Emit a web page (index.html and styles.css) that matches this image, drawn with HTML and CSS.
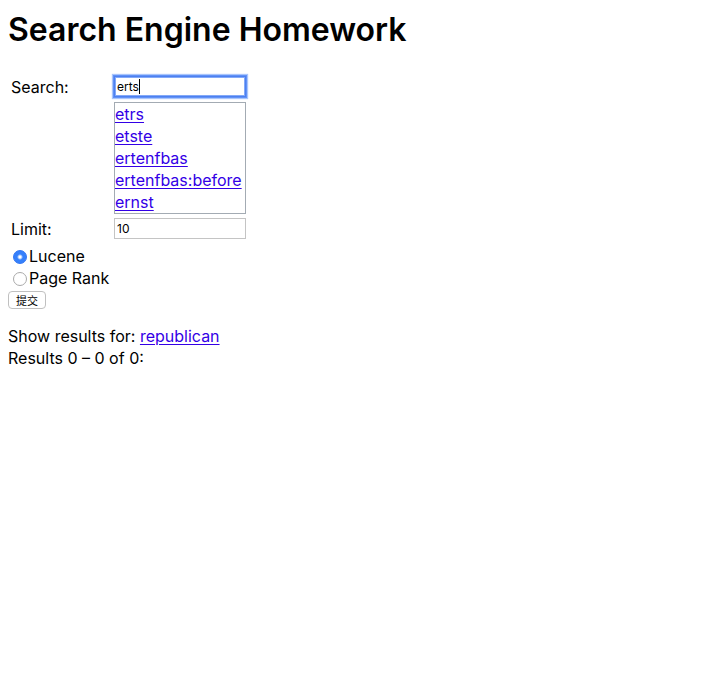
FILE: index.html
```html
<!DOCTYPE html>
<html lang="en">
<head>
<meta charset="utf-8">
<title>Search Engine Homework</title>
<link rel="stylesheet" href="styles.css">
</head>
<body>
<h1>Search Engine Homework</h1>
<form>
  <div class="fields">
    <label for="q">Search:</label>
    <div class="search"><input class="text" id="q" type="text" value="erts" autofocus><span class="caret"></span></div>
    <ul class="suggestions">
      <li><a href="#">etrs</a></li>
      <li><a href="#">etste</a></li>
      <li><a href="#">ertenfbas</a></li>
      <li><a href="#">ertenfbas:before</a></li>
      <li><a href="#">ernst</a></li>
    </ul>
    <label for="limit">Limit:</label>
    <input class="text" id="limit" type="text" value="10">
  </div>
  <div class="option"><input type="radio" id="lucene" name="rank" checked><label for="lucene">Lucene</label></div>
  <div class="option"><input type="radio" id="pagerank" name="rank"><label for="pagerank">Page Rank</label></div>
  <button class="submit" type="submit">提交</button>
</form>
<div class="results">
  <p>Show results for: <a href="#">republican</a></p>
  <p>Results 0 – 0 of 0:</p>
</div>
</body>
</html>
```
FILE: styles.css
```css
body {
  margin: 8px;
  background: #fff;
  color: #000;
  font: 16px/22px Inter, "Noto Sans CJK SC", sans-serif;
}
h1 { margin: 0 0 24px; font-size: 32px; line-height: 44px; font-weight: 600; }
a { color: #3300e6; text-underline-offset: 2px; text-decoration-thickness: 1px; }
p { margin: 0; }
.fields {
  display: grid;
  grid-template-columns: 99px 132px;
  gap: 4px;
  padding: 0 3px;
  margin-bottom: 5px;
  align-items: start;
}
.text {
  display: block;
  box-sizing: border-box;
  width: 100%;
  height: 21px;
  padding: 1px 2px;
  border: 1px solid #c4c4c4;
  font: 12px/16px Inter, sans-serif;
}
.search { position: relative; }
.search .text {
  border-color: #4d80f0;
  outline: none;
  box-shadow: 0 0 0 1px #6292f7, 0 0 1px 2px #a9c5fb, inset 0 0 0 1px #83a9f8;
  caret-color: transparent;
}
.caret {
  position: absolute;
  top: 3px;
  left: 25px;
  width: 1px;
  height: 15px;
  background: #000;
}
.suggestions {
  grid-column: 2;
  margin: 0;
  padding: 0;
  border: 1px solid #a3abb3;
  list-style: none;
}
.option { display: flex; align-items: center; }
.option input {
  appearance: none;
  box-sizing: border-box;
  width: 14px;
  height: 14px;
  margin: 2px 2px 0 5px;
  border: 1px solid #aaa;
  border-radius: 50%;
}
.option input:checked {
  border-color: #2f74f3;
  background: radial-gradient(circle, #fff 1px, #3580fb 3px);
}
.submit {
  display: block;
  height: 18px;
  margin-top: 2px;
  padding: 0 7px;
  border: 1px solid #c0c0c0;
  border-radius: 4px;
  background: #fff;
  color: #000;
  font: 11px/16px "Noto Sans CJK SC", sans-serif;
}
.results { margin-top: 16px; }
```
